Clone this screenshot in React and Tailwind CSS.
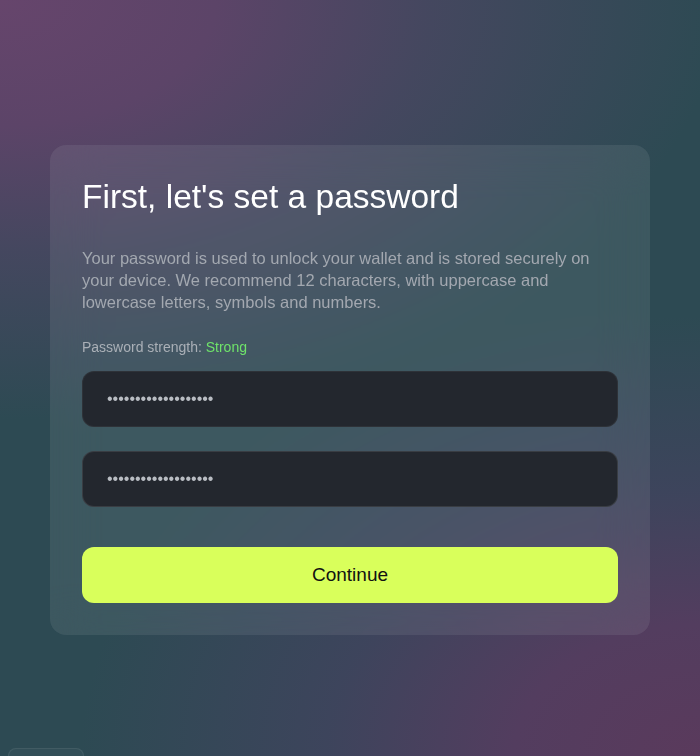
import React, { useState } from 'react';

const PasswordSetup = () => {
    const [password, setPassword] = useState('Tr0ub4dor&3-Horse!9');
    const [confirm, setConfirm] = useState('Tr0ub4dor&3-Horse!9');

    return (
        <div className="bg-white/[0.08] backdrop-blur-xl rounded-2xl p-8 w-[600px] mx-auto">
            <h1 className="text-[33.5px] leading-[40px] text-white">First, let's set a password</h1>

            <p className="mt-[30px] text-[16.5px] leading-[22px] text-[#a3a8b0]">
                Your password is used to unlock your wallet and is stored securely on your device. We recommend 12 characters, with uppercase and lowercase letters, symbols and numbers.
            </p>

            <p className="mt-6 text-sm leading-5 text-[#aab0b7]">
                Password strength: <span className="text-[#6fe36a]">Strong</span>
            </p>

            <div className="mt-[14px] flex flex-col gap-6">
                <input
                    type="password"
                    value={password}
                    onChange={(e) => setPassword(e.target.value)}
                    className="h-14 w-full rounded-xl bg-[#23272e] border border-white/5 px-6 text-base text-[#b9bdc3] outline-none"
                />
                <input
                    type="password"
                    value={confirm}
                    onChange={(e) => setConfirm(e.target.value)}
                    className="h-14 w-full rounded-xl bg-[#23272e] border border-white/10 px-6 text-base text-[#b9bdc3] outline-none"
                />
            </div>

            <button className="mt-10 h-14 w-full rounded-xl bg-[#d9ff5b] text-[19px] text-[#111]">
                Continue
            </button>
        </div>
    );
};

export default function App() {
    return (
        <div
            className="h-[756px] overflow-hidden pt-[145px] bg-[#2d4a53] bg-[radial-gradient(ellipse_720px_420px_at_0%_0%,#66456c_0%,#5c4468_30%,rgba(78,70,100,0.7)_60%,rgba(78,70,100,0)_100%),radial-gradient(ellipse_620px_440px_at_100%_100%,#5a3a5c_0%,#533d5f_30%,rgba(68,66,96,0.7)_60%,rgba(68,66,96,0)_100%)]"
            style={{ fontFamily: '"Liberation Sans", Arial, sans-serif' }}
        >
            <PasswordSetup />

            {/* language switch peeking from the bottom */}
            <div className="mt-[113px] ml-2 h-8 w-[76px] rounded-lg border border-white/[0.07] bg-white/[0.03]" />
        </div>
    );
}
